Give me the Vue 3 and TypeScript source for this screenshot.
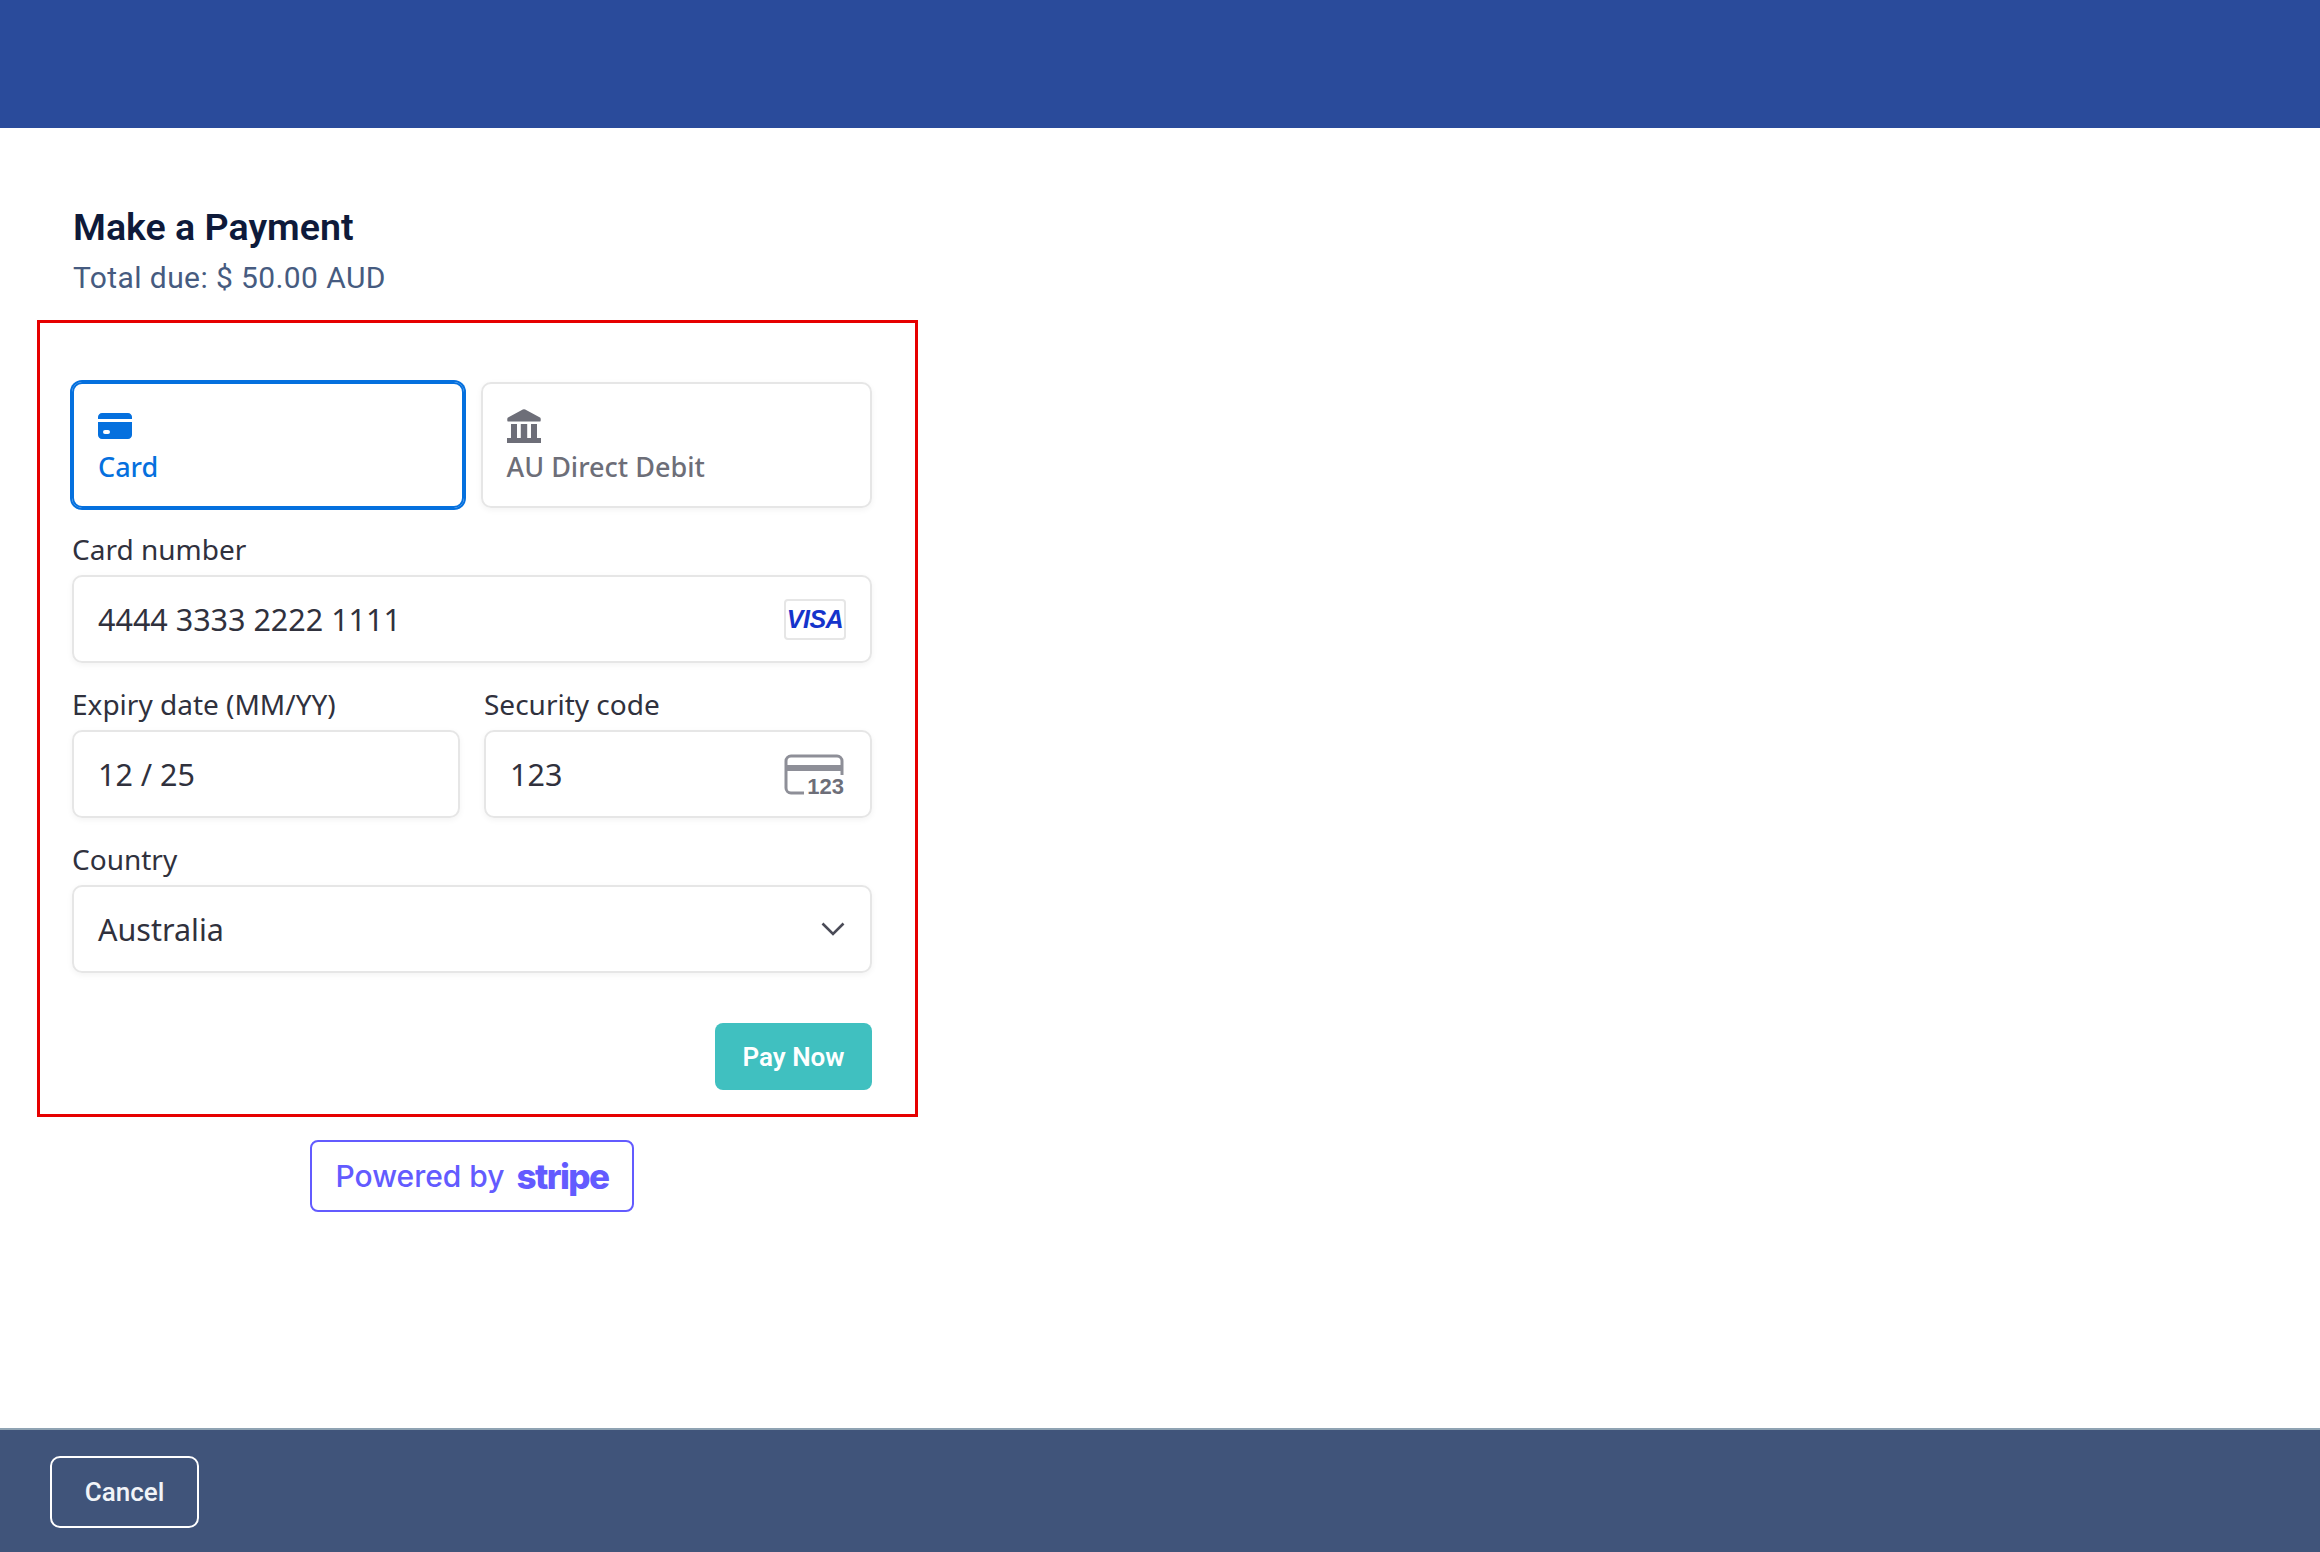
<template>
  <div class="page">
    <header class="top-bar"></header>

    <main class="content">
      <div class="intro">
        <h1>Make a Payment</h1>
        <p>Total due: $ 50.00 AUD</p>
      </div>

      <section class="payment-box">
        <div class="tabs">
          <div class="tab active">
            <svg class="tab-icon" viewBox="0 0 34 34">
              <path d="M0 8c0-2.200 1.800-4 4-4h26c2.200 0 4 1.800 4 4v2H0z" fill="currentColor" />
              <path
                fill-rule="evenodd"
                d="M0 13h34v13c0 2.200-1.800 4-4 4H4c-2.200 0-4-1.800-4-4zM7 21a2 2 0 0 0 0 4h3a2 2 0 0 0 0-4z"
                fill="currentColor"
              />
            </svg>
            <span>Card</span>
          </div>
          <div class="tab">
            <svg class="tab-icon" viewBox="0 0 34 34">
              <path d="M15.800.4a3 3 0 0 1 2.400 0L33 8.500c1 .5 1 4 0 4H1c-1 0-1-3.500 0-4z" fill="currentColor" />
              <path d="M4 15h6v14H4zM13.800 15h6.400v14h-6.400zM24 15h6v14h-6z" fill="currentColor" />
              <path d="M0 29h34v5H0z" fill="currentColor" />
            </svg>
            <span>AU Direct Debit</span>
          </div>
        </div>

        <div class="field">
          <label>Card number</label>
          <div class="input">
            <span>{{ cardNumber }}</span>
            <span class="visa-badge">VISA</span>
          </div>
        </div>

        <div class="field-row">
          <div class="field">
            <label>Expiry date (MM/YY)</label>
            <div class="input"><span>{{ expiry }}</span></div>
          </div>
          <div class="field">
            <label>Security code</label>
            <div class="input">
              <span>{{ securityCode }}</span>
              <svg class="cvc-icon" viewBox="0 0 62 46">
                <path
                  d="M58 21V7a5 5 0 0 0-5-5H7a5 5 0 0 0-5 5v27a5 5 0 0 0 5 5h13"
                  fill="none"
                  stroke="currentColor"
                  stroke-width="3"
                />
                <path d="M1 11h58v6H1z" fill="currentColor" />
                <text x="60" y="40" text-anchor="end" class="cvc-text">123</text>
              </svg>
            </div>
          </div>
        </div>

        <div class="field">
          <label>Country</label>
          <div class="input">
            <span>Australia</span>
            <svg class="chevron" viewBox="0 0 24 14">
              <path d="M1.500 1.500 12 12 22.500 1.500" fill="none" stroke="currentColor" stroke-width="2.600" />
            </svg>
          </div>
        </div>

        <div class="actions">
          <button class="pay-btn" type="button">Pay Now</button>
        </div>
      </section>

      <div class="powered-wrap">
        <div class="powered">
          <span class="powered-text">Powered by</span>
          <span class="stripe-word">stripe</span>
        </div>
      </div>
    </main>

    <footer class="bottom-bar">
      <button class="cancel-btn" type="button">Cancel</button>
    </footer>
  </div>
</template>

<script setup lang="ts">
const cardNumber = '4444 3333 2222 1111'
const expiry = '12 / 25'
const securityCode = '123'
</script>

<style>
html,
body {
  margin: 0;
  background: #fff;
}
</style>

<style scoped>
.page {
  display: flex;
  flex-direction: column;
  width: 2320px;
  height: 1552px;
  font-family: 'Noto Sans', 'Liberation Sans', sans-serif;
}

.top-bar {
  height: 128px;
  background: #2a4b9b;
}

.content {
  flex: 1;
  padding-left: 37px;
}

.intro {
  padding: 74px 0 0 36px;
  font-family: Roboto, 'Liberation Sans', sans-serif;
}

.intro h1 {
  margin: 0;
  font-size: 37.600px;
  line-height: 50px;
  font-weight: 600;
  color: #0e1a3a;
}

.intro p {
  margin: 6px 0 0;
  font-size: 30px;
  line-height: 40px;
  letter-spacing: 0.400px;
  color: #465b80;
}

.payment-box {
  box-sizing: border-box;
  width: 881px;
  margin-top: 22px;
  padding: 59px 43px 24px 32px;
  border: 3px solid #e60000;
}

.tabs {
  display: grid;
  grid-template-columns: 1fr 1fr;
  gap: 17px;
}

.tab {
  box-sizing: border-box;
  height: 126px;
  padding: 25px 24px 0;
  border: 2px solid #e6e6e6;
  border-radius: 10px;
  box-shadow: 0 2px 6px rgba(0, 0, 0, 0.05);
  color: #6d6e78;
  font-size: 27px;
  font-weight: 500;
  line-height: 38px;
}

.tab.active {
  border-color: #0570de;
  box-shadow: 0 0 0 2px #0570de;
  color: #0570de;
}

.tab span {
  display: block;
  margin-top: 5px;
}

.tab-icon {
  display: block;
  width: 34px;
  height: 34px;
}

.field {
  margin-top: 21px;
}

.field label {
  display: block;
  margin-bottom: 5px;
  color: #30313d;
  font-size: 28px;
  line-height: 41px;
}

.input {
  display: flex;
  align-items: center;
  justify-content: space-between;
  box-sizing: border-box;
  height: 88px;
  padding: 0 24px;
  border: 2px solid #e6e6e6;
  border-radius: 10px;
  box-shadow: 0 2px 6px rgba(0, 0, 0, 0.05);
  color: #30313d;
  font-size: 30.500px;
}

.field-row {
  display: grid;
  grid-template-columns: 1fr 1fr;
  gap: 24px;
}

.visa-badge {
  box-sizing: border-box;
  width: 62px;
  height: 41px;
  border: 2px solid #e6e6e6;
  border-radius: 4px;
  color: #1434cb;
  font-family: 'Liberation Sans', sans-serif;
  font-size: 25px;
  font-style: italic;
  font-weight: 700;
  letter-spacing: -0.500px;
  line-height: 37px;
  text-align: center;
}

.cvc-icon {
  width: 62px;
  height: 46px;
  margin-top: 5px;
  color: #8e8f98;
}

.cvc-text {
  fill: #6d6e78;
  font-family: 'Liberation Sans', sans-serif;
  font-size: 22px;
  font-weight: 700;
}

.chevron {
  width: 24px;
  height: 14px;
  margin-right: 1px;
  color: #4a4b57;
}

.actions {
  display: flex;
  justify-content: flex-end;
  margin-top: 50px;
}

.pay-btn {
  width: 157px;
  height: 67px;
  padding: 0;
  border: 0;
  border-radius: 8px;
  background: #40c0c0;
  color: #fff;
  font-family: Roboto, 'Liberation Sans', sans-serif;
  font-size: 26px;
  font-weight: 600;
}

.powered-wrap {
  display: flex;
  justify-content: center;
  width: 870px;
  margin-top: 23px;
}

.powered {
  display: flex;
  align-items: center;
  justify-content: center;
  gap: 12px;
  box-sizing: border-box;
  width: 324px;
  height: 72px;
  border: 2px solid #635bff;
  border-radius: 8px;
  color: #635bff;
}

.powered-text {
  font-family: Inter, sans-serif;
  font-size: 30px;
  font-weight: 500;
}

.stripe-word {
  font-family: Inter, sans-serif;
  font-size: 35px;
  font-weight: 800;
  letter-spacing: -1.600px;
}

.bottom-bar {
  box-sizing: border-box;
  height: 124px;
  padding: 26px 0 0 50px;
  border-top: 2px solid #8fa3b3;
  background: #40547a;
}

.cancel-btn {
  width: 149px;
  height: 72px;
  padding: 0;
  border: 2px solid #fff;
  border-radius: 10px;
  background: transparent;
  color: #f2f4f8;
  font-family: Roboto, 'Liberation Sans', sans-serif;
  font-size: 26px;
  font-weight: 500;
}
</style>
